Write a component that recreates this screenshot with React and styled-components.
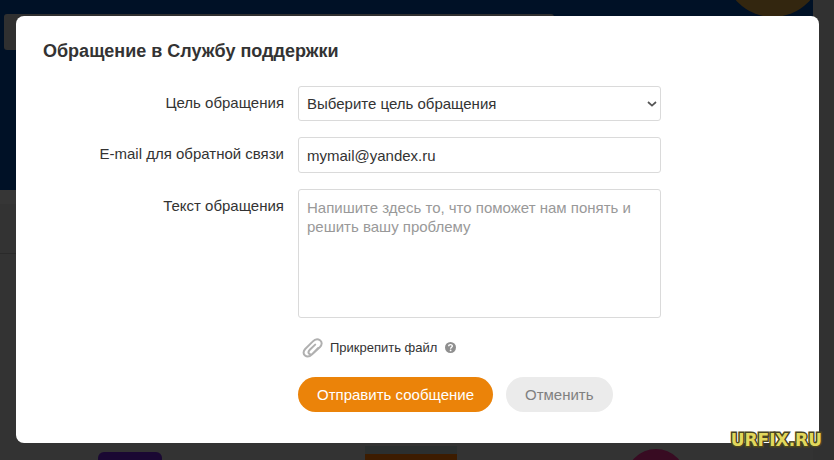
import { useState } from "react";
import styled, { createGlobalStyle } from "styled-components";

export default function App() {
    const [goal, setGoal] = useState("");
    const [email, setEmail] = useState("mymail@yandex.ru");
    const [message, setMessage] = useState("");

    return (
        <Page>
            <GlobalStyle />
            <Backdrop aria-hidden="true">
                <Hero>
                    <SearchBar />
                    <Coin />
                </Hero>
                <Strip />
                <Content />
                <Cards>
                    <PurpleTile />
                    <OrangeTile />
                    <PinkTile />
                </Cards>
                <ScrollTrack />
            </Backdrop>

            <Dialog role="dialog" aria-labelledby="support-title">
                <Title id="support-title">Обращение в Службу поддержки</Title>

                <Form onSubmit={(e) => e.preventDefault()}>
                    <Label htmlFor="goal">Цель обращения</Label>
                    <SelectBox>
                        <Select id="goal" value={goal} onChange={(e) => setGoal(e.target.value)}>
                            <option value="">Выберите цель обращения</option>
                        </Select>
                        <Chevron />
                    </SelectBox>

                    <Label htmlFor="email">E-mail для обратной связи</Label>
                    <Input id="email" type="email" value={email} onChange={(e) => setEmail(e.target.value)} />

                    <Label htmlFor="message">Текст обращения</Label>
                    <Textarea
                        id="message"
                        placeholder="Напишите здесь то, что поможет нам понять и решить вашу проблему"
                        value={message}
                        onChange={(e) => setMessage(e.target.value)}
                    />

                    <Footer>
                        <Attach>
                            <AttachButton type="button">
                                <Clip />
                                Прикрепить файл
                            </AttachButton>
                            <HelpButton type="button" aria-label="Справка">
                                <Help />
                            </HelpButton>
                        </Attach>
                        <Actions>
                            <Button type="submit" $primary>Отправить сообщение</Button>
                            <Button type="button">Отменить</Button>
                        </Actions>
                    </Footer>
                </Form>
            </Dialog>

            <Watermark>URFIX.RU</Watermark>
        </Page>
    );
}

function Chevron() {
    return (
        <ChevronIcon width="10" height="6" viewBox="0 0 10 6" aria-hidden="true">
            <path d="M1 1l4 3.6L9 1" fill="none" stroke="#555" strokeWidth="1.7" />
        </ChevronIcon>
    );
}

function Clip() {
    return (
        <svg width="22" height="20" viewBox="0 0 22 20" aria-hidden="true">
            <path
                d="M16.2 10L10.4 16C8 18.4 5 19.2 3 17.5C1 15.8 1.2 13.2 3.2 11L10.6 3.6C12.8 1.3 15.8 .7 18 2.3C20.4 4.1 20 6.9 18 9L11.8 14.9C10.2 16.4 8.3 16.9 7.2 15.8C6.1 14.7 6.5 13.1 7.8 11.8L13.2 6.6"
                fill="none"
                stroke="#b0b0b0"
                strokeWidth="2"
                strokeLinecap="round"
            />
        </svg>
    );
}

function Help() {
    return (
        <svg width="11" height="11" viewBox="0 0 11 11" aria-hidden="true">
            <circle cx="5.5" cy="5.5" r="5.5" fill="#8f8f8f" />
            <path d="M3.7 4.3C3.7 2 7.4 2.1 7.3 4.2C7.2 5.3 5.6 5.3 5.6 6.7" fill="none" stroke="#fff" strokeWidth="1.4" />
            <circle cx="5.6" cy="8.4" r=".9" fill="#fff" />
        </svg>
    );
}

const GlobalStyle = createGlobalStyle`
    * {
        box-sizing: border-box;
    }

    body {
        margin: 0;
        background: #333333;
        color: #333333;
        font-family: "Liberation Sans", Arial, sans-serif;
        font-size: 15px;
    }

    button, input, select, textarea {
        font: inherit;
        color: inherit;
    }
`
const Page = styled.div`
    position: relative;
    display: flow-root;
    min-height: 100vh;
    overflow: hidden;
`
const Backdrop = styled.div`
    position: absolute;
    inset: 0;
    overflow: hidden;
`
const Hero = styled.div`
    position: relative;
    height: 190px;
    padding: 14px 4px;
    background: #001126;
`
const SearchBar = styled.div`
    width: 550px;
    height: 36px;
    border-radius: 3px;
    background: #303030;
`
const Coin = styled.div`
    position: absolute;
    top: -80px;
    right: 12px;
    width: 98px;
    height: 97px;
    border-radius: 50%;
    background: #33260f;
`
const Strip = styled.div`
    height: 14px;
    background: #363636;
`
const Content = styled.div`
    height: 50px;
    border-bottom: 1px solid #2a2a2a;
`
const Cards = styled.div`
    display: grid;
    grid-template-columns: 260fr 302fr 188fr;
    justify-items: center;
    padding: 192px 84px 0 0;
`
const PurpleTile = styled.div`
    width: 64px;
    height: 64px;
    margin-top: 6px;
    border-radius: 6px;
    background: #1a0833;
`
const OrangeTile = styled.div`
    width: 92px;
    height: 70px;
    border-top: 8px solid #2b2f2f;
    background: #3d1c00;
`
const PinkTile = styled.div`
    width: 60px;
    height: 60px;
    margin-top: 3px;
    border-radius: 50%;
    background: #380b22;
`
const ScrollTrack = styled.div`
    position: absolute;
    top: 0;
    right: 0;
    bottom: 0;
    width: 21px;
    background: #313131;
`
const Dialog = styled.section`
    position: relative;
    margin: 16px 15px 17px 16px;
    padding: 24px 27px 31px;
    border-radius: 8px;
    background: #fff;
`
const Title = styled.h1`
    margin: 0 0 24px;
    font-size: 18px;
    line-height: 22px;
`
const Form = styled.form`
    display: grid;
    grid-template-columns: 241px minmax(0, 363px);
    gap: 16px 14px;
`
const Label = styled.label`
    padding-top: 8px;
    line-height: 18px;
    text-align: right;
`
const SelectBox = styled.div`
    position: relative;
`
const field = `
    display: block;
    width: 100%;
    height: 36px;
    padding: 0 8px;
    border: 1px solid #dadada;
    border-radius: 3px;
    background: #fff;
`
const Select = styled.select`
    ${field}
    height: 35px;
    appearance: none;
`
const ChevronIcon = styled.svg`
    position: absolute;
    top: 15px;
    right: 4px;
    pointer-events: none;
`
const Input = styled.input`
    ${field}
`
const Textarea = styled.textarea`
    ${field}
    height: 129px;
    padding: 8px;
    line-height: 19px;
    resize: none;

    &::placeholder {
        color: #999999;
    }
`
const Footer = styled.div`
    grid-column: 2;
`
const Attach = styled.div`
    display: flex;
    align-items: center;
    gap: 8px;
    height: 27px;
    margin-bottom: 16px;
    padding-left: 4px;
`
const AttachButton = styled.button`
    display: flex;
    align-items: center;
    gap: 6px;
    padding: 0;
    border: 0;
    background: none;
    font-size: 13px;
    cursor: pointer;
`
const HelpButton = styled.button`
    display: flex;
    padding: 0;
    border: 0;
    background: none;
    cursor: pointer;
`
const Actions = styled.div`
    display: flex;
    gap: 13px;
`
const Button = styled.button`
    height: 35px;
    padding: 0 19px;
    border: 0;
    border-radius: 18px;
    background: ${({ $primary }) => ($primary ? "#eb8309" : "#ebebeb")};
    color: ${({ $primary }) => ($primary ? "#fff" : "#808080")};
    white-space: nowrap;
    cursor: pointer;
`
const Watermark = styled.div`
    position: absolute;
    right: 12px;
    bottom: 10px;
    color: #e2d85c;
    font-family: "DejaVu Sans", sans-serif;
    font-size: 17px;
    font-weight: 700;
    line-height: 20px;
    -webkit-text-stroke: 3px #4a4520;
    paint-order: stroke fill;
`
